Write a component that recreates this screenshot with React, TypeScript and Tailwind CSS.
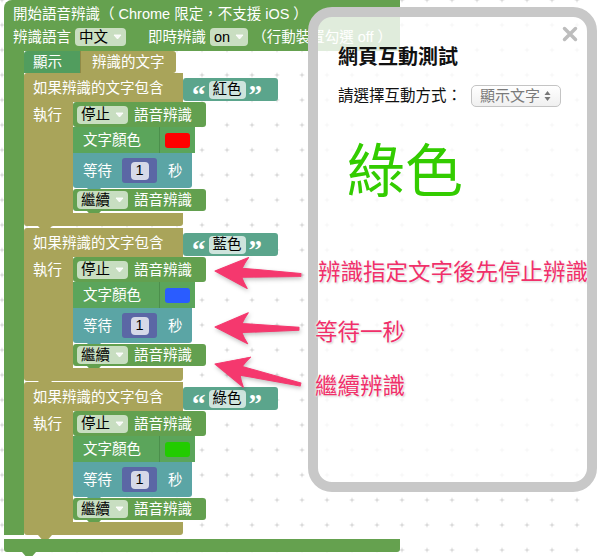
import React from "react";

const tab = "absolute left-[14px] bottom-[-4px] w-[14px] h-[4px] [clip-path:polygon(0_0,100%_0,75%_100%,25%_100%)]";

function Caret() {
  return (
    <svg width="9" height="6" viewBox="0 0 9 6">
      <path d="M1 1 L8 1 L4.5 5 Z" fill="#ffffff" fillOpacity="0.85" stroke="#ffffff" strokeOpacity="0.85" strokeLinejoin="round" />
    </svg>
  );
}

function Dropdown({ label }: { label: string }) {
  return (
    <span className="inline-flex items-center h-[18px] px-[4px] gap-[5px] rounded-[4px] bg-white/65 text-black leading-none">
      {label}
      <Caret />
    </span>
  );
}

function SpeechBlock({ verb, tall }: { verb: string; tall?: boolean }) {
  return (
    <div className={`relative w-[133px] ${tall ? "h-[25px]" : "h-[22px]"} bg-[#63a04f] rounded-[3px] flex items-center pl-[4px] gap-[6px] text-white`}>
      <Dropdown label={verb} />
      <span>語音辨識</span>
      <div className={`${tab} bg-[#63a04f]`} />
    </div>
  );
}

function ColorBlock({ color }: { color: string }) {
  return (
    <div className="relative w-[122px] h-[26px] bg-[#5ba55b] flex items-center pl-[10px] text-white">
      <span>文字顏色</span>
      <div className="ml-auto h-full w-[36px] border-l border-[#4c8f4c] flex items-center pl-[5px]">
        <div className="w-[25px] h-[15px] rounded-[3px]" style={{ backgroundColor: color }} />
      </div>
      <div className={`${tab} bg-[#5ba55b]`} />
    </div>
  );
}

function WaitBlock() {
  return (
    <div className="relative w-[119px] h-[35px] bg-[#5ba5a5] rounded-b-[3px] flex items-center pl-[10px] text-white">
      <span>等待</span>
      <div className="ml-[10px] w-[35px] h-[25px] bg-[#5b67a5] rounded-[3px] flex items-center justify-center">
        <span className="w-[18px] h-[18px] rounded-[4px] bg-white/75 text-black flex items-center justify-center leading-none">1</span>
      </div>
      <span className="ml-[11px]">秒</span>
      <div className={`${tab} bg-[#5ba5a5]`} />
    </div>
  );
}

function TextValue({ word }: { word: string }) {
  return (
    <div className="mt-[5px] w-[95px] h-[23px] bg-[#5ba58c] rounded-[3px] flex items-center pl-[9px] gap-[3px] text-white">
      <span className="font-bold font-['Liberation_Serif'] text-[27px] leading-none pt-[12px]">“</span>
      <span className="h-[18px] px-[4px] rounded-[4px] bg-white/70 text-black flex items-center leading-none">{word}</span>
      <span className="font-bold font-['Liberation_Serif'] text-[27px] leading-none pt-[12px]">”</span>
    </div>
  );
}

function IfBlock({ word, color }: { word: string; color: string }) {
  return (
    <div className="flex flex-col">
      <div className="flex items-start">
        <div className="w-[159px] h-[29px] bg-[#a9a45a] flex items-start pt-[5px] pl-[9px] text-white rounded-tl-[3px]">
          如果辨識的文字包含
        </div>
        <TextValue word={word} />
      </div>
      <div className="flex">
        <div className="w-[49px] bg-[#a9a45a] pl-[9px] pt-[3px] text-white">執行</div>
        <div className="flex flex-col pb-[2px]">
          <SpeechBlock verb="停止" tall />
          <ColorBlock color={color} />
          <WaitBlock />
          <div className="mt-[1px]">
            <SpeechBlock verb="繼續" />
          </div>
        </div>
      </div>
      <div className="relative w-[159px] h-[13px] bg-[#a9a45a] rounded-b-[3px]">
        <div className={`${tab} bg-[#a9a45a]`} />
      </div>
    </div>
  );
}

function Arrow({ x, y, len, angle }: { x: number; y: number; len: number; angle: number }) {
  return (
    <path
      transform={`translate(${x} ${y}) rotate(${angle})`}
      d={`M0 0 L33 -15 Q29 -9 27 -4 L${len} -1.5 L${len} 1.5 L27 5 Q29 10 33 16 Z`}
      fill="#f5386e"
      stroke="#f5386e"
      strokeLinejoin="round"
      strokeWidth="1"
    />
  );
}

export default function App() {
  const note = "absolute text-[#f0306a] text-[22.5px] leading-none [text-shadow:0_0_2px_#fff,0_0_3px_#fff,1px_1px_2px_#bbb]";
  return (
    <div className="relative w-[599px] h-[556px] overflow-hidden bg-white font-['Liberation_Sans','Noto_Sans_CJK_TC',sans-serif] text-[14.5px] leading-[20px]">
      <svg className="absolute inset-0" width="599" height="556">
        <defs>
          <pattern id="grid" x="-10.5" y="-12.5" width="25" height="25" patternUnits="userSpaceOnUse">
            <path d="M10.5 12.5 H14.5 M12.5 10.5 V14.5" stroke="#cfcfcf" strokeWidth="1" />
          </pattern>
        </defs>
        <rect width="599" height="556" fill="url(#grid)" />
      </svg>

      <div className="relative pl-[4px] flex flex-col">
        <div className="w-[396px] h-[51px] bg-[#65a14f] rounded-tl-[8px] pl-[9px] pt-[3px] text-white">
          <div className="h-[22px] flex items-center">開始語音辨識（ Chrome 限定，不支援 iOS ）</div>
          <div className="h-[24px] flex items-center gap-[4px]">
            <span>辨識語言</span>
            <Dropdown label="中文" />
            <span className="ml-[18px]">即時辨識</span>
            <Dropdown label="on" />
            <span>（行動裝置勾選 off ）</span>
          </div>
        </div>
        <div className="flex">
          <div className="w-[20px] bg-[#65a14f]" />
          <div className="flex flex-col">
            <div className="flex h-[22px]">
              <div className="w-[56px] bg-[#519d5e] rounded-tl-[3px] pl-[9px] text-white flex items-center">顯示</div>
              <div className="w-[96px] bg-[#a9a45a] border-l border-[#8f8a47] pl-[11px] text-white flex items-center rounded-r-[3px]">辨識的文字</div>
            </div>
            <IfBlock word="紅色" color="#ff0000" />
            <div className="mt-[2px]">
              <IfBlock word="藍色" color="#2a5cff" />
            </div>
            <div className="mt-[1px]">
              <IfBlock word="綠色" color="#22cc00" />
            </div>
          </div>
        </div>
        <div className="relative w-[396px] h-[13px] mt-[4px] bg-[#65a14f] rounded-b-[3px]">
          <div className={`${tab} left-[18px] bg-[#65a14f]`} />
        </div>
      </div>

      <div className="absolute left-[308px] top-[7px] w-[289px] h-[485px] border-[10px] border-[#c8c8c8] rounded-[24px] bg-white/80 pl-[20px] pt-[27px]">
        <svg className="absolute right-[9px] top-[9px]" width="16" height="16" viewBox="0 0 16 16">
          <path d="M2.5 2.5 L13.5 13.5 M13.5 2.5 L2.5 13.5" stroke="#bdbdbd" strokeWidth="3.5" strokeLinecap="round" />
        </svg>
        <div className="text-[20px] leading-[26px] font-bold text-[#111]">網頁互動測試</div>
        <div className="mt-[15px] flex items-center h-[22px] text-[15.5px] text-[#111]">
          <span>請選擇互動方式：</span>
          <span className="ml-[9px] w-[90px] h-[22px] rounded-[5px] border border-[#c4c4c4] bg-gradient-to-b from-white to-[#f0f0f0] flex items-center pl-[8px] gap-[4px] text-[15px] text-[#7a7a7a]">
            顯示文字
            <svg width="7" height="12" viewBox="0 0 7 12">
              <path d="M3.5 1 L6.5 5 L0.5 5 Z M3.5 11 L6.5 7 L0.5 7 Z" fill="#777" />
            </svg>
          </span>
        </div>
        <div className="mt-[30px] ml-[9px] text-[58px] leading-[70px] text-[#33cc00]">綠色</div>
      </div>

      <svg className="absolute inset-0 pointer-events-none [filter:drop-shadow(1px_2px_2px_rgba(0,0,0,0.25))]" width="599" height="556">
        <Arrow x={215} y={271} len={86} angle={2.7} />
        <Arrow x={215} y={327} len={84} angle={1.2} />
        <Arrow x={215} y={364} len={88} angle={13.5} />
      </svg>

      <div className={`${note} left-[318px] top-[262px]`}>辨識指定文字後先停止辨識</div>
      <div className={`${note} left-[315px] top-[322px]`}>等待一秒</div>
      <div className={`${note} left-[315px] top-[376px]`}>繼續辨識</div>
    </div>
  );
}
